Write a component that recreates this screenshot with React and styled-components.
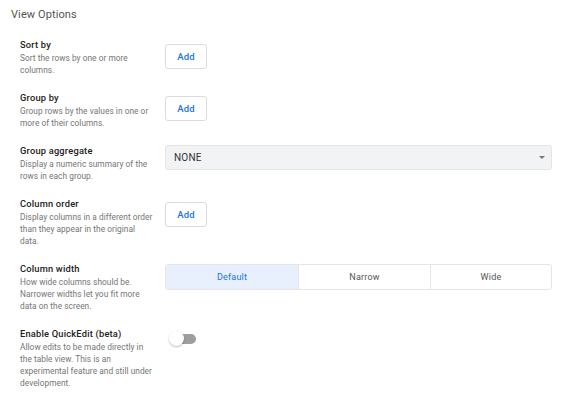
import React from 'react'
import styled, { createGlobalStyle } from 'styled-components'

const Global = createGlobalStyle`
  body {
    margin: 0;
    background: #fff;
    font-family: Roboto, "Liberation Sans", sans-serif;
  }
`

const Page = styled.div`
  padding: 8px 12px 0 11px;
`

const Heading = styled.div`
  font-size: 11px;
  line-height: 14px;
  color: #555;
  letter-spacing: 0.1px;
  margin-bottom: 16px;
`

const List = styled.div`
  display: flex;
  flex-direction: column;
  gap: 15px;
  padding-left: 9px;
`

const Row = styled.div`
  display: flex;
  align-items: flex-start;
`

const Label = styled.div`
  width: 135px;
  flex: none;
  margin-right: 10px;
`

const Title = styled.div`
  font-size: 9.3px;
  line-height: 14px;
  font-weight: 500;
  color: #222;
  letter-spacing: 0.2px;
`

const Desc = styled.div`
  font-size: 8.3px;
  line-height: 12px;
  color: #757575;
  letter-spacing: 0.05px;
`

const Control = styled.div`
  flex: 1;
  display: flex;
  margin-top: ${p => p.$top}px;
`

const AddButton = styled.button`
  width: 42px;
  height: 25px;
  border: 1px solid #dadce0;
  border-radius: 3px;
  background: #fff;
  color: #1a73e8;
  font-family: inherit;
  font-size: 9.5px;
  font-weight: 500;
  letter-spacing: 0.2px;
  padding: 0;
  cursor: pointer;
`

const Select = styled.div`
  flex: 1;
  height: 25px;
  box-sizing: border-box;
  display: flex;
  align-items: center;
  justify-content: space-between;
  padding: 0 6px 0 8px;
  background: #f1f3f4;
  border: 1px solid #e3e5e8;
  border-radius: 3px;
  font-size: 10px;
  color: #333;
  letter-spacing: 0.2px;
`

const Caret = styled.span`
  width: 0;
  height: 0;
  border-left: 3.5px solid transparent;
  border-right: 3.5px solid transparent;
  border-top: 3.5px solid #777;
`

const Segmented = styled.div`
  flex: 1;
  display: grid;
  grid-template-columns: 132px 132px 1fr;
  height: 26px;
  box-sizing: border-box;
  border: 1px solid #e3e5e8;
  border-radius: 3px;
  overflow: hidden;
`

const Segment = styled.div`
  display: flex;
  align-items: center;
  justify-content: center;
  font-size: 9px;
  letter-spacing: 0.2px;
  color: ${p => (p.$active ? '#1a73e8' : '#555')};
  background: ${p => (p.$active ? '#e8f0fe' : '#fff')};
  & + & {
    border-left: 1px solid #e3e5e8;
  }
`

const Toggle = styled.div`
  position: relative;
  width: 27px;
  height: 16px;
  margin-left: 4px;
`

const Track = styled.div`
  position: absolute;
  left: 3px;
  right: 0;
  top: 3px;
  height: 10px;
  border-radius: 5px;
  background: #9e9e9e;
`

const Thumb = styled.div`
  position: absolute;
  left: 0;
  top: 0;
  width: 15px;
  height: 15px;
  border-radius: 50%;
  background: #fff;
  box-shadow: 0 1px 2px rgba(0, 0, 0, 0.28);
`

const rows = [
  { title: 'Sort by', desc: 'Sort the rows by one or more columns.', kind: 'add', top: 6 },
  { title: 'Group by', desc: 'Group rows by the values in one or more of their columns.', kind: 'add', top: 5 },
  { title: 'Group aggregate', desc: 'Display a numeric summary of the rows in each group.', kind: 'select', top: 1 },
  { title: 'Column order', desc: 'Display columns in a different order than they appear in the original data.', kind: 'add', top: 5 },
  { title: 'Column width', desc: 'How wide columns should be. Narrower widths let you fit more data on the screen.', kind: 'width', top: 2 },
  { title: 'Enable QuickEdit (beta)', desc: 'Allow edits to be made directly in the table view. This is an experimental feature and still under development.', kind: 'toggle', top: 4 }
]

function renderControl (kind) {
  if (kind === 'add') return <AddButton>Add</AddButton>
  if (kind === 'select') {
    return (
      <Select>
        <span>NONE</span>
        <Caret />
      </Select>
    )
  }
  if (kind === 'width') {
    return (
      <Segmented>
        <Segment $active>Default</Segment>
        <Segment>Narrow</Segment>
        <Segment>Wide</Segment>
      </Segmented>
    )
  }
  return (
    <Toggle>
      <Track />
      <Thumb />
    </Toggle>
  )
}

export default function App () {
  return (
    <Page>
      <Global />
      <Heading>View Options</Heading>
      <List>
        {rows.map(r => (
          <Row key={r.title}>
            <Label>
              <Title>{r.title}</Title>
              <Desc>{r.desc}</Desc>
            </Label>
            <Control $top={r.top}>{renderControl(r.kind)}</Control>
          </Row>
        ))}
      </List>
    </Page>
  )
}
